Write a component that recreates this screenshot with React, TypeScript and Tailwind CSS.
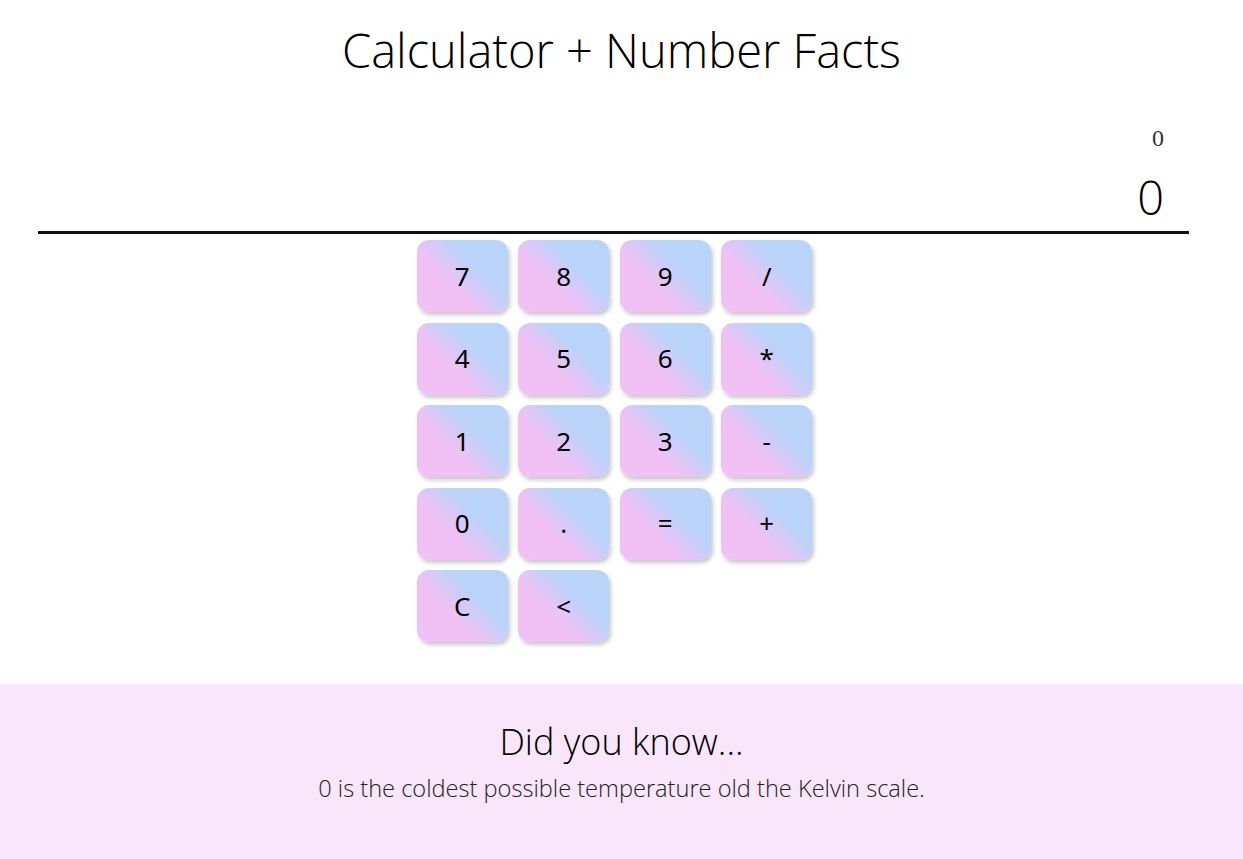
import React, { useState } from "react";

const keys = ["7", "8", "9", "/", "4", "5", "6", "*", "1", "2", "3", "-", "0", ".", "=", "+", "C", "<"];

const App: React.FC = () => {
  const [current] = useState("0");
  const [previous] = useState("0");

  return (
    <div className="min-h-screen bg-white text-black font-['Open_Sans',sans-serif]">
      <h1 className="pt-[21px] h-[124px] text-center text-[47px] font-light leading-[58px]">
        Calculator + Number Facts
      </h1>
      <div className="ml-[38px] mr-[54px] border-b-[3px] border-[#111] pr-[25px] pb-[6px] text-right">
        <div className="font-['Liberation_Serif',serif] text-[24px] leading-[28px] text-[#333]">
          {previous}
        </div>
        <div className="mt-[17px] text-[47px] font-light leading-[56px]">{current}</div>
      </div>
      <div className="flex justify-center pr-[14px] pt-[6px]">
        <div className="grid grid-cols-[repeat(4,91px)] auto-rows-[72px] gap-x-[10.5px] gap-y-[10.5px]">
          {keys.map((k) => (
            <button
              key={k}
              className="rounded-[12px] bg-[linear-gradient(45deg,#f1c1f6_38%,#b9d3f9_64%)] font-['Noto_Sans',sans-serif] text-[26px] text-black shadow-[2px_3px_4px_rgba(0,0,0,0.22)]"
            >
              {k}
            </button>
          ))}
        </div>
      </div>
      <div className="mt-[42px] h-[200px] bg-[#f9e6fa] pt-[36px] text-center">
        <h2 className="text-[36px] font-light leading-[44px]">Did you know...</h2>
        <p className="mt-[9px] text-[23.6px] font-light leading-[30px] text-[#222]">
          0 is the coldest possible temperature old the Kelvin scale.
        </p>
      </div>
    </div>
  );
};

export default App;
